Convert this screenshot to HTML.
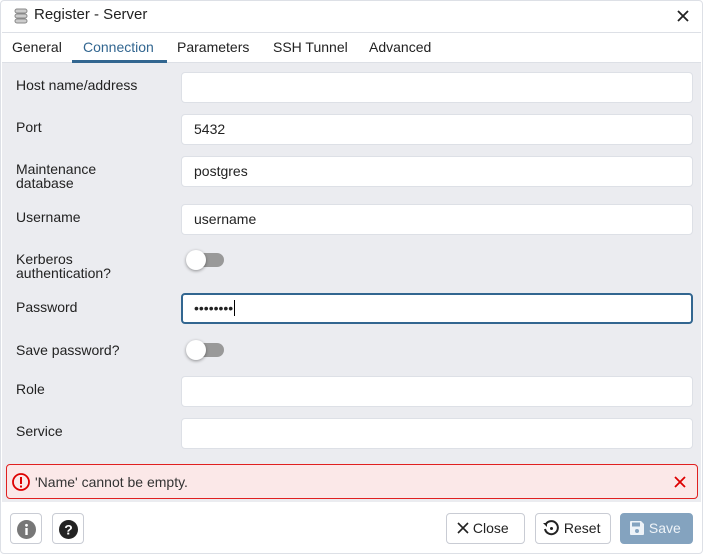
<!DOCTYPE html><html><head><style>
*{box-sizing:border-box}body{margin:0;width:703px;height:554px;overflow:hidden;font-family:"Liberation Sans",sans-serif;font-size:14px;color:#222;background:#fff;position:relative}
.a{position:absolute}
.inp{position:absolute;left:181px;width:512px;height:31px;background:#fff;border:1px solid #dde0e6;border-radius:4px;padding:0 12px;line-height:29px;font-size:14px}
.lbl{position:absolute;left:16px;font-size:14px;line-height:14px}
.tg{position:absolute;left:186px;width:38px;height:20px}
.tg .tr{position:absolute;left:4px;top:3px;width:34px;height:14px;border-radius:7px;background:#999}
.tg .k{position:absolute;left:0;top:0;width:20px;height:20px;border-radius:50%;background:#fff;box-shadow:0 1px 3px rgba(0,0,0,.4)}
.btn{position:absolute;top:513px;height:31px;border:1px solid #c9ccd4;border-radius:4px;background:#fff;font-size:14px;line-height:29px;color:#222}
</style></head><body>
<div class="a" style="left:0;top:0;width:703px;height:554px;border:1px solid #dde0e6;border-radius:4px"></div>
<svg class="a" style="left:14px;top:8px" width="14" height="16" viewBox="0 0 14 16"><rect x="1" y="1" width="12" height="4" rx="2" fill="#ccc" stroke="#888"/><rect x="1" y="6" width="12" height="4" rx="2" fill="#ccc" stroke="#888"/><rect x="1" y="11" width="12" height="4" rx="2" fill="#ccc" stroke="#888"/></svg>
<div class="a" style="left:34px;top:6px;font-size:15px;color:#222">Register - Server</div>
<svg class="a" style="left:677px;top:10px" width="12" height="12"><path d="M1 1L11 11M11 1L1 11" stroke="#222" stroke-width="1.8"/></svg>
<div class="a" style="left:2px;top:32px;width:699px;height:31px;border-top:1px solid #dde0e6;border-bottom:1px solid #dde0e6"></div>
<div class="a" style="left:12px;top:39px">General</div>
<div class="a" style="left:83px;top:39px;color:#326690">Connection</div>
<div class="a" style="left:72px;top:60px;width:95px;height:3px;background:#326690"></div>
<div class="a" style="left:177px;top:39px">Parameters</div>
<div class="a" style="left:273px;top:39px">SSH Tunnel</div>
<div class="a" style="left:369px;top:39px">Advanced</div>
<div class="a" style="left:2px;top:63px;width:699px;height:439px;background:#ebecf0"></div>
<div class="lbl" style="top:78px">Host name/address</div><div class="inp" style="top:72px"></div>
<div class="lbl" style="top:120px">Port</div><div class="inp" style="top:114px">5432</div>
<div class="lbl" style="top:162px">Maintenance<br>database</div><div class="inp" style="top:156px">postgres</div>
<div class="lbl" style="top:210px">Username</div><div class="inp" style="top:204px">username</div>
<div class="lbl" style="top:252px">Kerberos<br>authentication?</div><div class="tg" style="top:250px"><div class="tr"></div><div class="k"></div></div>
<div class="lbl" style="top:300px">Password</div><div class="inp" style="top:293px;border:2px solid #326690;line-height:27px;padding-left:11px">••••••••<span style="border-left:1px solid #000;margin-left:1px"></span></div>
<div class="lbl" style="top:343px">Save password?</div><div class="tg" style="top:340px"><div class="tr"></div><div class="k"></div></div>
<div class="lbl" style="top:382px">Role</div><div class="inp" style="top:376px"></div>
<div class="lbl" style="top:424px">Service</div><div class="inp" style="top:418px"></div>
<div class="a" style="left:6px;top:464px;width:692px;height:35px;background:#fbe8e8;border:1px solid #e02020;border-radius:4px"></div>
<svg class="a" style="left:11px;top:472px" width="20" height="20" viewBox="0 0 20 20"><circle cx="10" cy="10" r="8" fill="none" stroke="#d00" stroke-width="1.8"/><rect x="9" y="5" width="2" height="7" fill="#d00"/><rect x="9" y="13.5" width="2" height="2" fill="#d00"/></svg>
<div class="a" style="left:35px;top:474px;color:#333">'Name' cannot be empty.</div>
<svg class="a" style="left:674px;top:476px" width="12" height="12"><path d="M1 1L11 11M11 1L1 11" stroke="#d00" stroke-width="1.8"/></svg>
<div class="btn" style="left:10px;width:32px"><svg style="position:absolute;left:6px;top:6px" width="19" height="19"><circle cx="9.5" cy="9.5" r="9.5" fill="#777"/><rect x="8.3" y="8" width="2.4" height="7" fill="#fff"/><circle cx="9.5" cy="5.3" r="1.4" fill="#fff"/></svg></div>
<div class="btn" style="left:52px;width:32px"><svg style="position:absolute;left:6px;top:6px" width="19" height="19"><circle cx="9.5" cy="9.5" r="9.5" fill="#222"/><text x="9.5" y="14.5" text-anchor="middle" fill="#fff" font-size="14" font-weight="bold" font-family="Liberation Sans">?</text></svg></div>
<div class="btn" style="left:446px;width:79px;padding-left:10px"><svg style="vertical-align:-1px" width="12" height="12"><path d="M1 1L11 11M11 1L1 11" stroke="#222" stroke-width="1.6"/></svg> Close</div>
<div class="btn" style="left:535px;width:76px;padding-left:6px"><svg style="vertical-align:-4px" width="18" height="18" viewBox="0 0 18 18"><path d="M4 5A6.5 6.5 0 1 1 3 10" fill="none" stroke="#222" stroke-width="2"/><path d="M1 4l4 0 0 4z" fill="#222"/><circle cx="9.5" cy="9.5" r="1.5" fill="#222"/></svg> Reset</div>
<div class="btn" style="left:620px;width:73px;background:#84a3bf;border-color:#84a3bf;color:#eef3f8;padding-left:8px"><svg style="vertical-align:-3px" width="16" height="16" viewBox="0 0 16 16"><path d="M1 2a1 1 0 0 1 1-1h10l3 3v10a1 1 0 0 1-1 1H2a1 1 0 0 1-1-1z" fill="#eef3f8"/><rect x="3" y="2.5" width="8" height="4" fill="#84a3bf"/><circle cx="8" cy="11" r="2" fill="#84a3bf"/></svg> Save</div>
</body></html>
